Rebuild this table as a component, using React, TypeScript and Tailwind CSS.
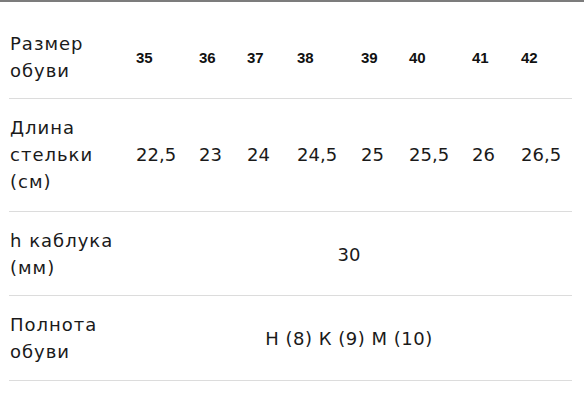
import React from "react";

const sizes = ["35", "36", "37", "38", "39", "40", "41", "42"];
const lens = ["22,5", "23", "24", "24,5", "25", "25,5", "26", "26,5"];

const cols =
  "grid grid-cols-[117px_63px_48px_50px_64px_48px_63px_49px_1fr] items-center border-b border-[#dcdcdc]";

const label = "pl-[1px] tracking-[1px]";

export default function App() {
  return (
    <div
      className="w-[584px] h-[404px] bg-white text-[#1a1a1a] overflow-hidden"
      style={{ fontFamily: '"DejaVu Sans", sans-serif' }}
    >
      <div className="h-[2px] bg-[#7c7c7c]" />
      <div className="ml-[9px] w-[563px] mt-[14px]">
        <div className={cols + " py-[14px] text-[18px] leading-[27px]"}>
          <div className={label}>
            Размер
            <br />
            обуви
          </div>
          {sizes.map((s) => (
            <div
              key={s}
              className="pl-[10px] text-[15px] font-bold text-[#111]"
              style={{ fontFamily: '"Liberation Sans", sans-serif' }}
            >
              {s}
            </div>
          ))}
        </div>
        <div className={cols + " pt-[15px] pb-[16px] text-[18px] leading-[27px]"}>
          <div className={label}>
            Длина
            <br />
            стельки
            <br />
            (см)
          </div>
          {lens.map((s) => (
            <div key={s} className="pl-[10px]">
              {s}
            </div>
          ))}
        </div>
        <div className={cols + " pt-[15px] pb-[14px] text-[18px] leading-[27px]"}>
          <div className={label}>
            h каблука
            <br />
            (мм)
          </div>
          <div className="col-span-8 text-center">30</div>
        </div>
        <div className={cols + " py-[15px] text-[18px] leading-[27px]"}>
          <div className={label}>
            Полнота
            <br />
            обуви
          </div>
          <div className="col-span-8 text-center tracking-[0.5px]">Н (8) К (9) М (10)</div>
        </div>
      </div>
    </div>
  );
}
